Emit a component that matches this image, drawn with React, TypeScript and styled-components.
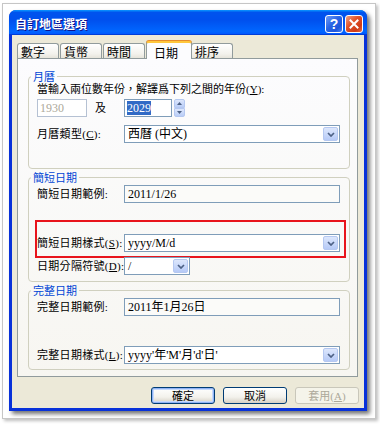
import React from 'react';
import styled, { createGlobalStyle, css } from 'styled-components';

const GlobalStyle = createGlobalStyle`
  *, *::before, *::after { box-sizing: border-box; }
  html, body { margin: 0; padding: 0; background: #fff; }
  body {
    width: 380px;
    height: 424px;
    overflow: hidden;
    font-family: "Liberation Serif", "Noto Sans CJK TC", serif;
    color: #000;
  }
`;

const Chevron = () => (
  <svg width="8" height="5" viewBox="0 0 8 5">
    <path d="M1 1 L4 4 L7 1" fill="none" stroke="#4d6185" strokeWidth="1.7" />
  </svg>
);

const CloseX = () => (
  <svg width="10" height="10" viewBox="0 0 10 10">
    <path d="M1.5 1.5 L8.5 8.5 M8.5 1.5 L1.5 8.5" stroke="#fff" strokeWidth="2" strokeLinecap="square" />
  </svg>
);

const App = () => {
  return (
    <>
      <GlobalStyle />
      <Frame>
        <Window>
          <TitleBar>
            <Title>自訂地區選項</Title>
            <CapButtons>
              <CapButton kind="help">?</CapButton>
              <CapButton kind="close">
                <CloseX />
              </CapButton>
            </CapButtons>
          </TitleBar>
          <Client>
            <Tabs>
              <Tab>數字</Tab>
              <Tab>貨幣</Tab>
              <Tab>時間</Tab>
              <Tab active>日期</Tab>
              <Tab>排序</Tab>
            </Tabs>
            <Panel>
              <Group>
                <Legend>月曆</Legend>
                <Prompt>
                  當輸入兩位數年份，解譯爲下列之間的年份(<u>Y</u>):
                </Prompt>
                <Row top={3}>
                  <Cell>
                    <YearBox disabled width={50}>1930</YearBox>
                    <And>及</And>
                  </Cell>
                  <Cell>
                    <YearBox width={48}>
                      <Selected>2029</Selected>
                    </YearBox>
                    <Spin>
                      <SpinPart up>
                        <svg width="5" height="3" viewBox="0 0 5 3">
                          <path d="M0 3 L2.5 0 L5 3 Z" fill="#4d6185" />
                        </svg>
                      </SpinPart>
                      <SpinPart>
                        <svg width="5" height="3" viewBox="0 0 5 3">
                          <path d="M0 0 L2.5 3 L5 0 Z" fill="#4d6185" />
                        </svg>
                      </SpinPart>
                    </Spin>
                  </Cell>
                </Row>
                <Row top={8}>
                  <Label>
                    月曆類型(<u>C</u>):
                  </Label>
                  <Combo>
                    <ComboText>西曆 (中文)</ComboText>
                    <DropButton>
                      <Chevron />
                    </DropButton>
                  </Combo>
                </Row>
              </Group>

              <Group bottom={6}>
                <Legend>簡短日期</Legend>
                <Row top={2}>
                  <Label>簡短日期範例:</Label>
                  <Field>2011/1/26</Field>
                </Row>
                <Row top={31}>
                  <Label>
                    簡短日期樣式(<u>S</u>):
                  </Label>
                  <Combo>
                    <ComboText>yyyy/M/d</ComboText>
                    <DropButton>
                      <Chevron />
                    </DropButton>
                  </Combo>
                  <Highlight />
                </Row>
                <Row top={5}>
                  <Label>
                    日期分隔符號(<u>D</u>):
                  </Label>
                  <Combo width={66}>
                    <ComboText>/</ComboText>
                    <DropButton>
                      <Chevron />
                    </DropButton>
                  </Combo>
                </Row>
              </Group>

              <Group bottom={5}>
                <Legend>完整日期</Legend>
                <Row top={2}>
                  <Label>完整日期範例:</Label>
                  <Field>2011年1月26日</Field>
                </Row>
                <Row top={30}>
                  <Label>
                    完整日期樣式(<u>L</u>):
                  </Label>
                  <Combo>
                    <ComboText>yyyy'年'M'月'd'日'</ComboText>
                    <DropButton>
                      <Chevron />
                    </DropButton>
                  </Combo>
                </Row>
              </Group>
            </Panel>
            <ButtonRow>
              <Button isDefault>確定</Button>
              <Button>取消</Button>
              <Button disabled>
                套用(<u>A</u>)
              </Button>
            </ButtonRow>
          </Client>
        </Window>
      </Frame>
    </>
  );
};

export default App;

const Frame = styled.div`
  margin: 3px 0 0 2px;
  width: 374px;
  height: 416px;
  border: 1px solid #c6c6c6;
  box-shadow: 2px 2px 3px rgba(0, 0, 0, 0.25);
  background: #fff;
  padding: 6px 0 0 6px;
`;

const Window = styled.div`
  width: 358px;
  height: 401px;
  display: flex;
  flex-direction: column;
  background: #0831d9;
  border-radius: 7px 7px 0 0;
  box-shadow: 3px 3px 4px rgba(0, 0, 0, 0.55);
`;

const TitleBar = styled.div`
  height: 25px;
  flex: none;
  display: flex;
  align-items: center;
  justify-content: space-between;
  padding: 2px 4px 0 6px;
  border-radius: 7px 7px 0 0;
  background: linear-gradient(
    to bottom,
    #0997ff 0%,
    #0053ee 10%,
    #0050ee 40%,
    #0066ff 85%,
    #005bff 94%,
    #003dd7 97%,
    #003dd7 100%
  );
`;

const Title = styled.div`
  color: #fff;
  font-family: "Noto Sans CJK TC", sans-serif;
  font-size: 12px;
  font-weight: 700;
  line-height: 14px;
  text-shadow: 1px 1px #0f1089;
`;

const CapButtons = styled.div`
  display: flex;
  gap: 2px;
`;

const CapButton = styled.div<{ kind: 'help' | 'close' }>`
  width: 18px;
  height: 18px;
  border: 1px solid #fff;
  border-radius: 3px;
  display: flex;
  align-items: center;
  justify-content: center;
  color: #fff;
  font-family: "Liberation Sans", sans-serif;
  font-weight: 700;
  font-size: 14px;
  line-height: 1;
  ${(p) =>
    p.kind === 'help'
      ? css`
          background: linear-gradient(135deg, #6d9cf8 0%, #2a64e4 45%, #1f57dc 75%, #4a82f2 100%);
        `
      : css`
          background: linear-gradient(135deg, #f2a184 0%, #e2542a 40%, #cf3a16 75%, #e56b45 100%);
        `}
`;

const Client = styled.div`
  flex: 1;
  margin: 0 3px 3px;
  background: #ece9d8;
  padding: 6px 6px 4px 5px;
  display: flex;
  flex-direction: column;
`;

const Tabs = styled.div`
  height: 17px;
  flex: none;
  display: flex;
  align-items: flex-end;
`;

const Tab = styled.div<{ active?: boolean }>`
  height: 15px;
  padding: 0 13px 0 3px;
  font-family: "Noto Sans CJK TC", sans-serif;
  font-size: 12px;
  line-height: 15px;
  border: 1px solid #919b9c;
  border-bottom: 0;
  border-radius: 3px 3px 0 0;
  background: linear-gradient(to bottom, #ffffff, #f3f2ec 70%, #e6e4da);
  margin-right: 1px;
  ${(p) =>
    p.active &&
    css`
      position: relative;
      z-index: 2;
      height: 18px;
      margin: 0 -1px -1px 0;
      padding: 2px 13px 0 7px;
      background: #fcfcfe;
      border-top: 2px solid #ffc73c;
      box-shadow: 0 -1px 0 #e68b2c;
    `}
`;

const Panel = styled.div`
  height: 319px;
  flex: none;
  border: 1px solid #919b9c;
  background: linear-gradient(to bottom, #fcfcfe, #f7f6f1);
  padding: 11px 7px 0 10px;
  display: flex;
  flex-direction: column;
  gap: 2px;
`;

const Group = styled.fieldset<{ bottom?: number }>`
  margin: 0;
  min-width: 0;
  border: 1px solid #d0d0bf;
  border-radius: 4px;
  padding: 0 9px ${(p) => p.bottom ?? 25}px 8px;
`;

const Legend = styled.legend`
  margin-left: -6px;
  padding: 0 2px;
  font-family: "Noto Sans CJK TC", sans-serif;
  font-size: 11px;
  line-height: 12px;
  color: #0046d5;
`;

const Prompt = styled.div`
  font-size: 11px;
  line-height: 14px;
  white-space: nowrap;
`;

const Row = styled.div<{ top: number }>`
  position: relative;
  margin-top: ${(p) => p.top}px;
  display: grid;
  grid-template-columns: 87px 216px;
  align-items: center;
  height: 18px;
`;

const Cell = styled.div`
  display: flex;
  align-items: center;
`;

const Label = styled.div`
  font-size: 11px;
  line-height: 14px;
  letter-spacing: 0.3px;
  white-space: nowrap;
`;

const And = styled.span`
  margin-left: 8px;
  font-size: 11px;
  line-height: 14px;
`;

const YearBox = styled.div<{ width: number; disabled?: boolean }>`
  width: ${(p) => p.width}px;
  height: 18px;
  border: 1px solid ${(p) => (p.disabled ? '#b5c1d3' : '#7f9db9')};
  background: #fff;
  padding-left: 2px;
  display: flex;
  align-items: center;
  font-size: 12px;
  line-height: 14px;
  color: ${(p) => (p.disabled ? '#aca899' : '#000')};
`;

const Selected = styled.span`
  background: #316ac5;
  color: #fff;
`;

const Spin = styled.div`
  width: 11px;
  height: 18px;
  margin-left: 2px;
  display: flex;
  flex-direction: column;
  gap: 0;
`;

const SpinPart = styled.div<{ up?: boolean }>`
  flex: 1;
  display: flex;
  align-items: center;
  justify-content: center;
  border: 1px solid #b5c8f1;
  border-radius: ${(p) => (p.up ? '2px 2px 0 0' : '0 0 2px 2px')};
  background: linear-gradient(to bottom, #dde7fc, #b9cdf7);
`;

const Field = styled.div`
  height: 18px;
  border: 1px solid #7f9db9;
  background: #fbfbf9;
  padding-left: 3px;
  display: flex;
  align-items: center;
  font-size: 12px;
  line-height: 14px;
  white-space: nowrap;
`;

const Combo = styled.div<{ width?: number }>`
  width: ${(p) => (p.width ? `${p.width}px` : '100%')};
  height: 18px;
  border: 1px solid #7f9db9;
  background: #fff;
  display: flex;
  align-items: stretch;
  padding: 1px;
`;

const ComboText = styled.div`
  flex: 1;
  padding-left: 2px;
  display: flex;
  align-items: center;
  font-size: 12px;
  line-height: 14px;
  white-space: nowrap;
`;

const DropButton = styled.div`
  width: 15px;
  flex: none;
  display: flex;
  align-items: center;
  justify-content: center;
  border: 1px solid #b5c8f1;
  border-radius: 2px;
  background: linear-gradient(to bottom, #dde7fc, #b6caf7);
`;

const Highlight = styled.div`
  position: absolute;
  left: -2px;
  top: -14px;
  right: -6px;
  bottom: -6px;
  border: 2px solid #e8141c;
  pointer-events: none;
`;

const ButtonRow = styled.div`
  margin-top: 10px;
  display: flex;
  justify-content: flex-end;
  gap: 8px;
  margin-right: -1px;
`;

const Button = styled.div<{ isDefault?: boolean; disabled?: boolean }>`
  width: 64px;
  height: 17px;
  border: 1px solid #003c74;
  border-radius: 3px;
  background: linear-gradient(to bottom, #ffffff, #f3f2ec 60%, #d6d0c5);
  display: flex;
  align-items: center;
  justify-content: center;
  font-family: "Liberation Serif", "Noto Sans CJK TC", serif;
  font-size: 11px;
  line-height: 14px;
  ${(p) =>
    p.isDefault &&
    css`
      box-shadow: inset 0 0 0 1px #8fb2f5, inset 0 0 0 2px #c6dafc;
    `}
  ${(p) =>
    p.disabled &&
    css`
      border-color: #c9c7ba;
      background: #f5f4ea;
      color: #aca899;
    `}
`;
